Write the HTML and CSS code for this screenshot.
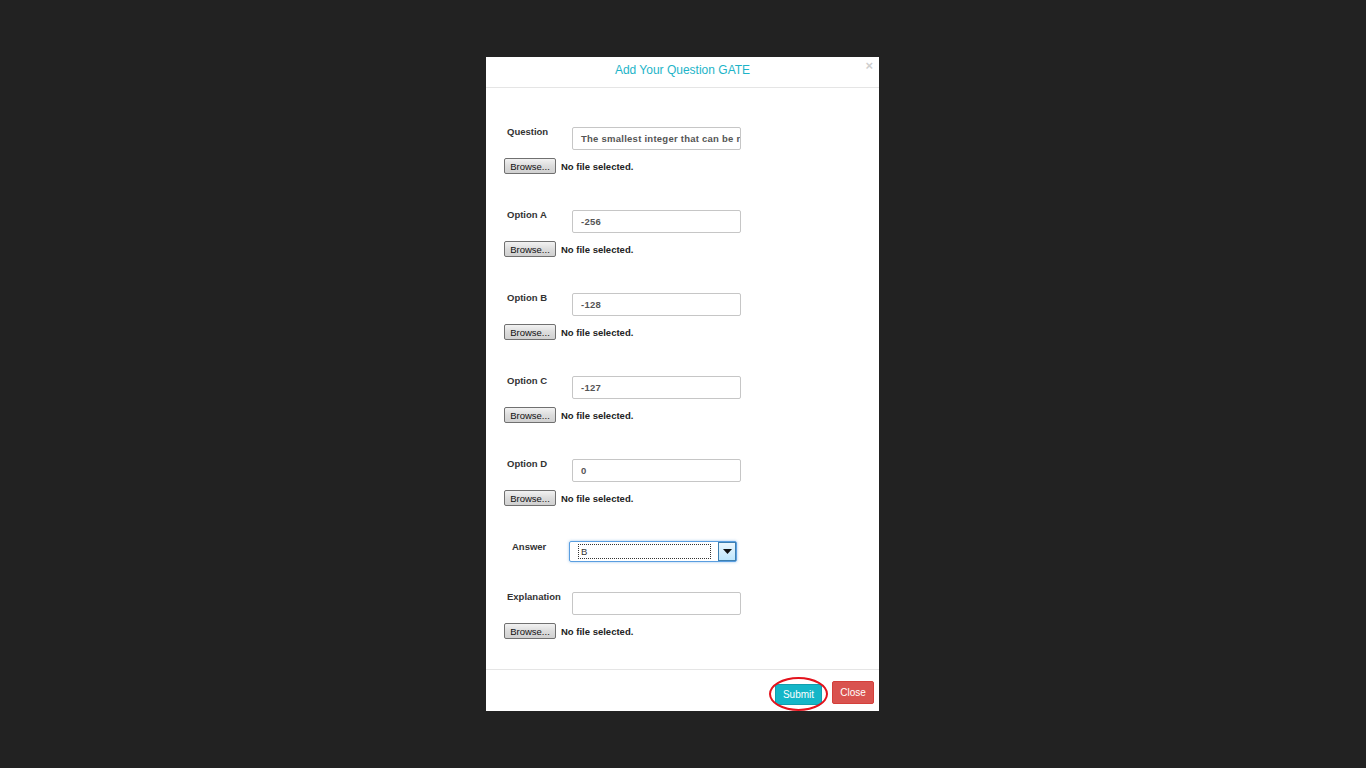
FILE: index.html
```html
<!DOCTYPE html>
<html>
<head>
<meta charset="utf-8">
<link rel="stylesheet" href="styles.css">
</head>
<body>
<div class="modal">
  <div class="modal-header">
    <span class="modal-title">Add Your Question GATE</span>
    <span class="modal-x">×</span>
  </div>
  <div class="modal-body">
    <div class="group">
      <div class="row"><label class="lbl">Question</label><div class="inp">The smallest integer that can be r</div></div>
      <div class="file"><span class="browse">Browse...</span><span class="nofile">No file selected.</span></div>
    </div>
    <div class="group">
      <div class="row"><label class="lbl">Option A</label><div class="inp">-256</div></div>
      <div class="file"><span class="browse">Browse...</span><span class="nofile">No file selected.</span></div>
    </div>
    <div class="group">
      <div class="row"><label class="lbl">Option B</label><div class="inp">-128</div></div>
      <div class="file"><span class="browse">Browse...</span><span class="nofile">No file selected.</span></div>
    </div>
    <div class="group">
      <div class="row"><label class="lbl">Option C</label><div class="inp">-127</div></div>
      <div class="file"><span class="browse">Browse...</span><span class="nofile">No file selected.</span></div>
    </div>
    <div class="group">
      <div class="row"><label class="lbl">Option D</label><div class="inp">0</div></div>
      <div class="file"><span class="browse">Browse...</span><span class="nofile">No file selected.</span></div>
    </div>
    <div class="group answer">
      <div class="row"><label class="lbl lbl-answer">Answer</label>
        <div class="select"><span class="sel-val">B</span><span class="sel-btn"><svg width="9" height="5" viewBox="0 0 9 5"><path d="M0 0h9L4.5 5z" fill="#111"/></svg></span></div>
      </div>
    </div>
    <div class="group">
      <div class="row"><label class="lbl">Explanation</label><div class="inp"></div></div>
      <div class="file"><span class="browse">Browse...</span><span class="nofile">No file selected.</span></div>
    </div>
  </div>
  <div class="modal-footer">
    <span class="btn btn-submit">Submit<span class="ring"></span></span>
    <span class="btn btn-close">Close</span>
  </div>
</div>
</body>
</html>
```
FILE: styles.css
```css
html, body {
  margin: 0;
  padding: 0;
  background: #222222;
  height: 100%;
}
body {
  font-family: "Liberation Sans", Arial, sans-serif;
}
.modal {
  width: 393px;
  height: 654px;
  margin: 57px 0 0 calc(50% - 197px);
  background: #fff;
  display: flex;
  flex-direction: column;
}
.modal-header {
  flex-shrink: 0;
  height: 30px;
  border-bottom: 1px solid #e5e5e5;
  display: flex;
  justify-content: center;
  align-items: center;
  position: relative;
}
.modal-title {
  color: #1db4c8;
  font-size: 12px;
  margin-top: -5px;
}
.modal-x {
  position: absolute;
  right: 6px;
  top: 1px;
  color: #cfcfcf;
  font-size: 13px;
  font-weight: bold;
}
.modal-body {
  flex: 1;
  min-height: 0;
  padding: 39px 0 0 18px;
  box-sizing: border-box;
}
.group {
  margin-bottom: 36px;
}
.group.answer {
  margin-bottom: 30px;
}
.row {
  display: flex;
  align-items: flex-start;
}
.lbl {
  width: 68px;
  padding-left: 3px;
  box-sizing: border-box;
  font-size: 9.5px;
  font-weight: bold;
  color: #333;
  margin-top: -1px;
}
.lbl-answer {
  padding-left: 8px;
  margin-top: -1px;
}
.inp {
  width: 169px;
  height: 23px;
  box-sizing: border-box;
  border: 1px solid #c6c6c6;
  border-radius: 2px;
  padding: 0 2px 0 8px;
  font-size: 9.5px;
  font-weight: bold;
  color: #555;
  line-height: 21px;
  white-space: nowrap;
  overflow: hidden;
  letter-spacing: 0.25px;
}
.file {
  display: flex;
  align-items: center;
  margin-top: 8px;
}
.browse {
  width: 52px;
  height: 16px;
  box-sizing: border-box;
  border: 1px solid #707070;
  border-radius: 2px;
  background: linear-gradient(#f2f2f2, #dcdcdc 50%, #d0d0d0);
  font-size: 9.5px;
  color: #111;
  display: flex;
  align-items: center;
  justify-content: center;
}
.nofile {
  margin-left: 5px;
  font-size: 9.5px;
  font-weight: bold;
  color: #222;
}
.select {
  margin-left: -3px;
  margin-top: -1px;
  width: 168px;
  height: 21px;
  box-sizing: border-box;
  border: 1px solid #5a9ee0;
  border-radius: 2px;
  box-shadow: 0 0 3px rgba(90, 158, 224, 0.6);
  display: flex;
  align-items: stretch;
  padding: 1px;
}
.sel-val {
  flex: 1;
  margin: 1px 7px 1px 7px;
  border: 1px dotted #333;
  font-size: 9.5px;
  color: #333;
  padding-left: 2px;
  line-height: 14px;
}
.sel-btn {
  width: 16px;
  border: 1px solid #3c7fb1;
  background: linear-gradient(#eaf6fd, #bee6fd);
  display: flex;
  align-items: center;
  justify-content: center;
  margin: -1px -1px -1px 0;
}
.modal-footer {
  flex-shrink: 0;
  height: 42px;
  border-top: 1px solid #e5e5e5;
  display: flex;
  justify-content: flex-end;
  align-items: flex-start;
  padding: 11px 5px 0 0;
  box-sizing: border-box;
  gap: 10px;
}
.btn {
  color: #fff;
  font-size: 10px;
  border-radius: 2px;
  display: flex;
  align-items: center;
  justify-content: center;
  box-sizing: border-box;
}
.btn-submit {
  width: 47px;
  height: 21px;
  margin-top: 3px;
  background: #14b6c8;
  border: 1px solid #129fae;
  position: relative;
}
.btn-close {
  width: 42px;
  height: 23px;
  background: #d9534f;
  border: 1px solid #d43f3a;
}
.ring {
  position: absolute;
  left: -7px;
  top: -8px;
  width: 59px;
  height: 34px;
  box-sizing: border-box;
  border: 2px solid #e3121c;
  border-radius: 50%;
}
```
